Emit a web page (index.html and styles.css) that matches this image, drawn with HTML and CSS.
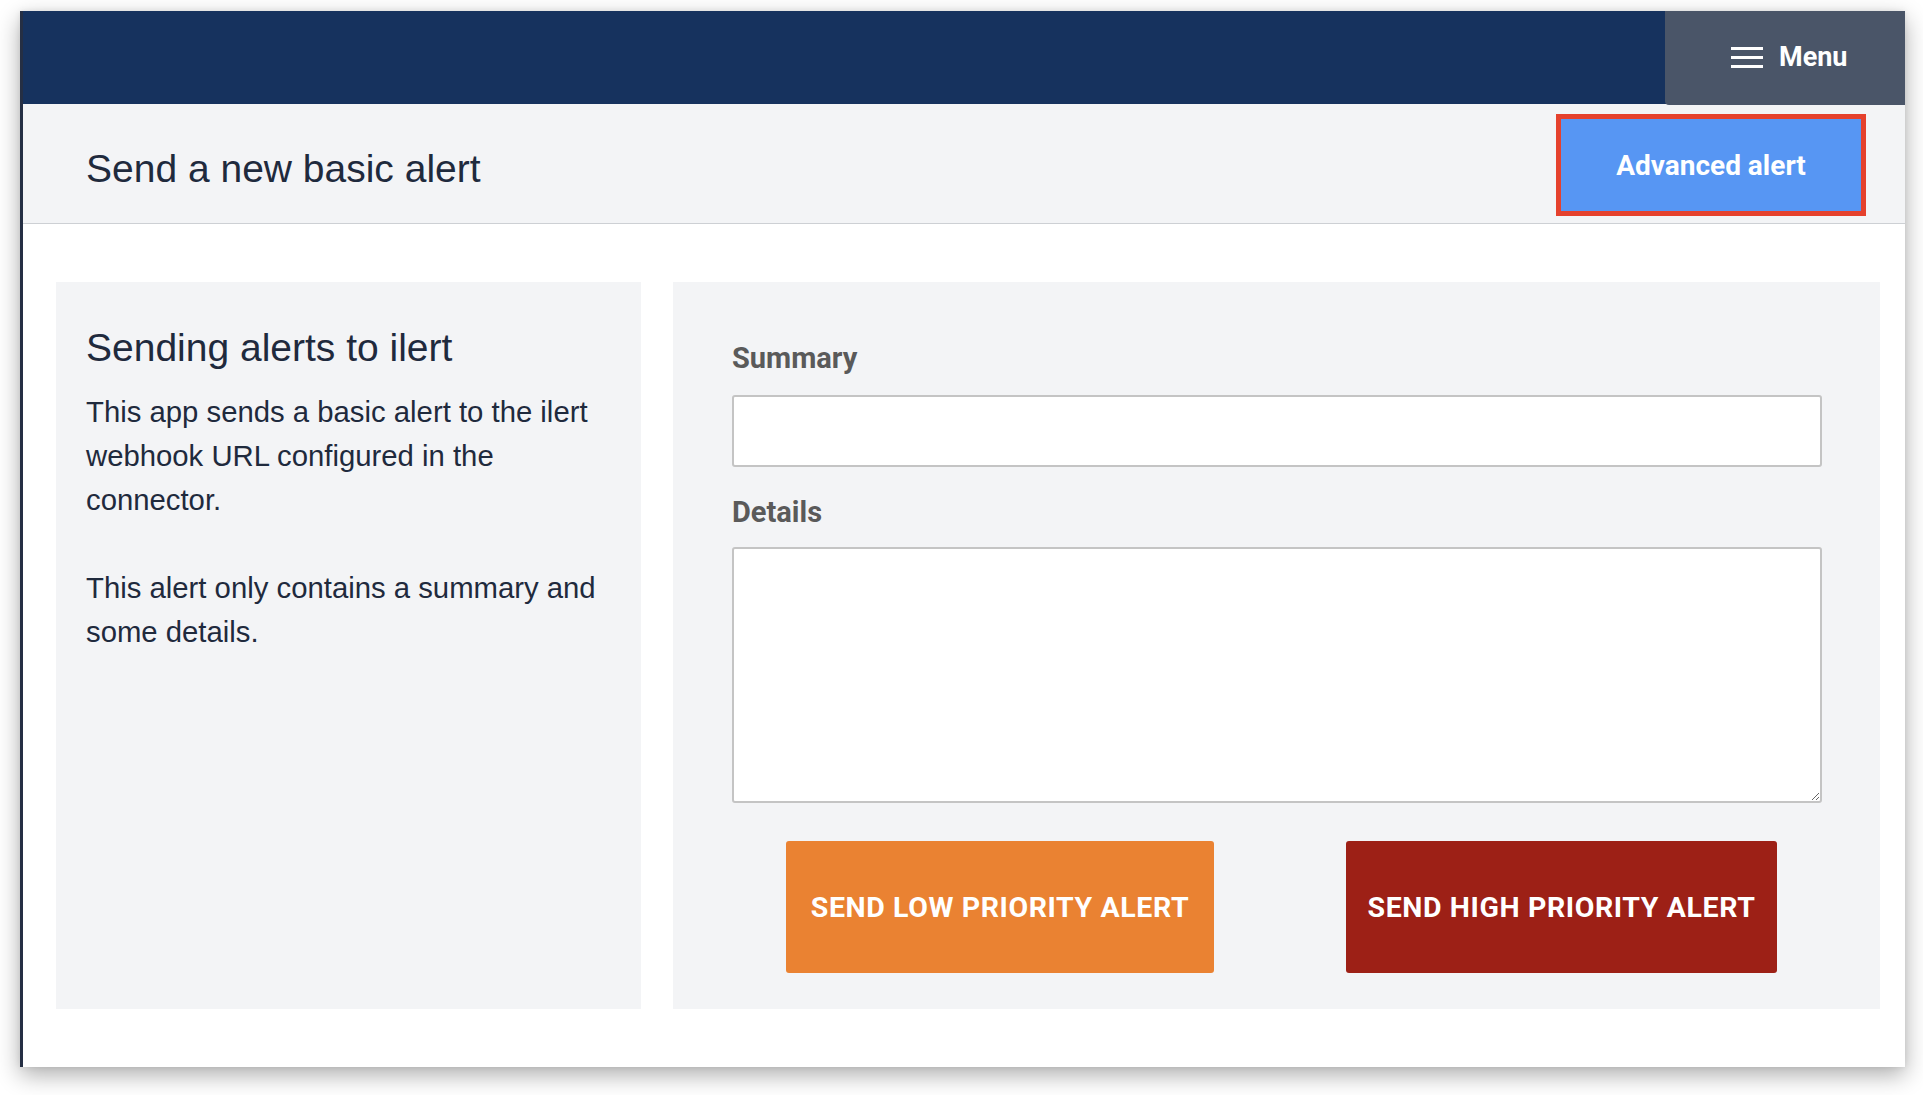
FILE: index.html
```html
<!DOCTYPE html>
<html lang="en">
<head>
<meta charset="utf-8">
<title>Send a new basic alert</title>
<link rel="stylesheet" href="styles.css">
</head>
<body>
<div class="window">
  <header class="topbar">
    <button class="menu" type="button">
      <svg class="menu-icon" width="32" height="21" viewBox="0 0 32 21" aria-hidden="true">
        <rect x="0" y="0" width="32" height="3" fill="#ffffff"/>
        <rect x="0" y="9" width="32" height="3" fill="#ffffff"/>
        <rect x="0" y="18" width="32" height="3" fill="#ffffff"/>
      </svg>
      <span>Menu</span>
    </button>
  </header>
  <div class="subbar">
    <h1 class="page-title">Send a new basic alert</h1>
    <button class="adv-btn" type="button">Advanced alert</button>
  </div>
  <main class="content">
    <section class="card info">
      <h2 class="info-title">Sending alerts to ilert</h2>
      <p class="info-text">This app sends a basic alert to the ilert webhook URL configured in the connector.</p>
      <p class="info-text">This alert only contains a summary and some details.</p>
    </section>
    <section class="card form">
      <label class="field-label" for="summary">Summary</label>
      <input class="field-input" id="summary" type="text">
      <label class="field-label details" for="details">Details</label>
      <textarea class="field-area" id="details"></textarea>
      <div class="actions">
        <button class="act-btn low" type="button">SEND LOW PRIORITY ALERT</button>
        <button class="act-btn high" type="button">SEND HIGH PRIORITY ALERT</button>
      </div>
    </section>
  </main>
</div>
</body>
</html>
```

FILE: styles.css
```css
* { box-sizing: border-box; }

html, body {
  margin: 0;
  padding: 0;
  background: #ffffff;
}

body {
  width: 1923px;
  height: 1095px;
  overflow: hidden;
  font-family: "Liberation Sans", Arial, Helvetica, sans-serif;
  color: #1f2a3d;
}

.window {
  margin: 11px 0 0 20px;
  width: 1885px;
  height: 1056px;
  border-left: 3px solid #252f44;
  background: #ffffff;
  box-shadow: 0 8px 22px rgba(0, 0, 0, 0.32), 0 0 6px rgba(0, 0, 0, 0.08);
  display: flex;
  flex-direction: column;
}

/* top navigation bar */
.topbar {
  height: 93px;
  flex: none;
  background: #16325e;
  display: flex;
  justify-content: flex-end;
}

.menu {
  width: 240px;
  height: 94px;
  margin-bottom: -1px;
  border: 0;
  border-bottom-left-radius: 4px;
  background: #4a5568;
  color: #ffffff;
  display: flex;
  align-items: center;
  gap: 16px;
  padding: 0 0 2px 66px;
  font-family: Roboto, "Liberation Sans", Arial, sans-serif;
  font-weight: 700;
  font-size: 27px;
  cursor: pointer;
  position: relative;
  z-index: 1;
}

.menu-icon { display: block; flex: none; }

/* sub header */
.subbar {
  height: 120px;
  flex: none;
  background: #f3f4f6;
  border-bottom: 1px solid #cdd0d4;
  display: flex;
  align-items: center;
  justify-content: space-between;
  padding: 0 39px 0 63px;
}

.page-title {
  margin: 10px 0 0 0;
  font-weight: 400;
  font-size: 39px;
  line-height: 46px;
  color: #1f2a3d;
}

.adv-btn {
  width: 310px;
  height: 102px;
  margin-top: 3px;
  border: 5px solid #e5412d;
  background: #5796f3;
  color: #ffffff;
  font-family: Roboto, "Liberation Sans", Arial, sans-serif;
  font-weight: 700;
  font-size: 28px;
  cursor: pointer;
}

/* content */
.content {
  flex: 1;
  min-height: 0;
  display: flex;
  gap: 32px;
  padding: 58px 25px 58px 33px;
}

.card {
  background: #f3f4f6;
}

.info {
  width: 585px;
  flex: none;
  padding: 42px 30px 0 30px;
}

.info-title {
  margin: 0 0 19px 0;
  font-weight: 400;
  font-size: 39px;
  line-height: 47px;
  color: #1f2a3d;
}

.info-text {
  margin: 0 0 44px 0;
  font-size: 29.3px;
  line-height: 44px;
  color: #1f2a3d;
}

.form {
  flex: 1;
  display: flex;
  flex-direction: column;
  padding: 54px 58px 36px 59px;
}

.field-label {
  display: block;
  font-family: Roboto, "Liberation Sans", Arial, sans-serif;
  font-weight: 700;
  font-size: 29px;
  line-height: 44px;
  color: #5a5a5a;
  margin-bottom: 15px;
}

.field-label.details {
  margin-bottom: 13px;
}

.field-input {
  display: block;
  width: 100%;
  height: 72px;
  flex: none;
  margin: 0 0 23px 0;
  border: 2px solid #c4c4c4;
  border-radius: 3px;
  background: #ffffff;
  font-size: 26px;
  padding: 0 12px;
}

.field-area {
  display: block;
  width: 100%;
  height: 256px;
  flex: none;
  margin: 0;
  border: 2px solid #c4c4c4;
  border-radius: 3px;
  background: #ffffff;
  font-size: 26px;
  padding: 10px 12px;
  resize: both;
}

.actions {
  display: flex;
  justify-content: space-between;
  margin-top: 38px;
  padding: 0 45px 0 54px;
}

.act-btn {
  height: 132px;
  border: 0;
  border-radius: 3px;
  color: #ffffff;
  font-family: Roboto, "Liberation Sans", Arial, sans-serif;
  font-weight: 700;
  font-size: 28.5px;
  letter-spacing: 0.6px;
  padding: 0;
  cursor: pointer;
}

.act-btn.low {
  width: 428px;
  background: #ea8232;
}

.act-btn.high {
  width: 431px;
  background: #9d2016;
}
```
